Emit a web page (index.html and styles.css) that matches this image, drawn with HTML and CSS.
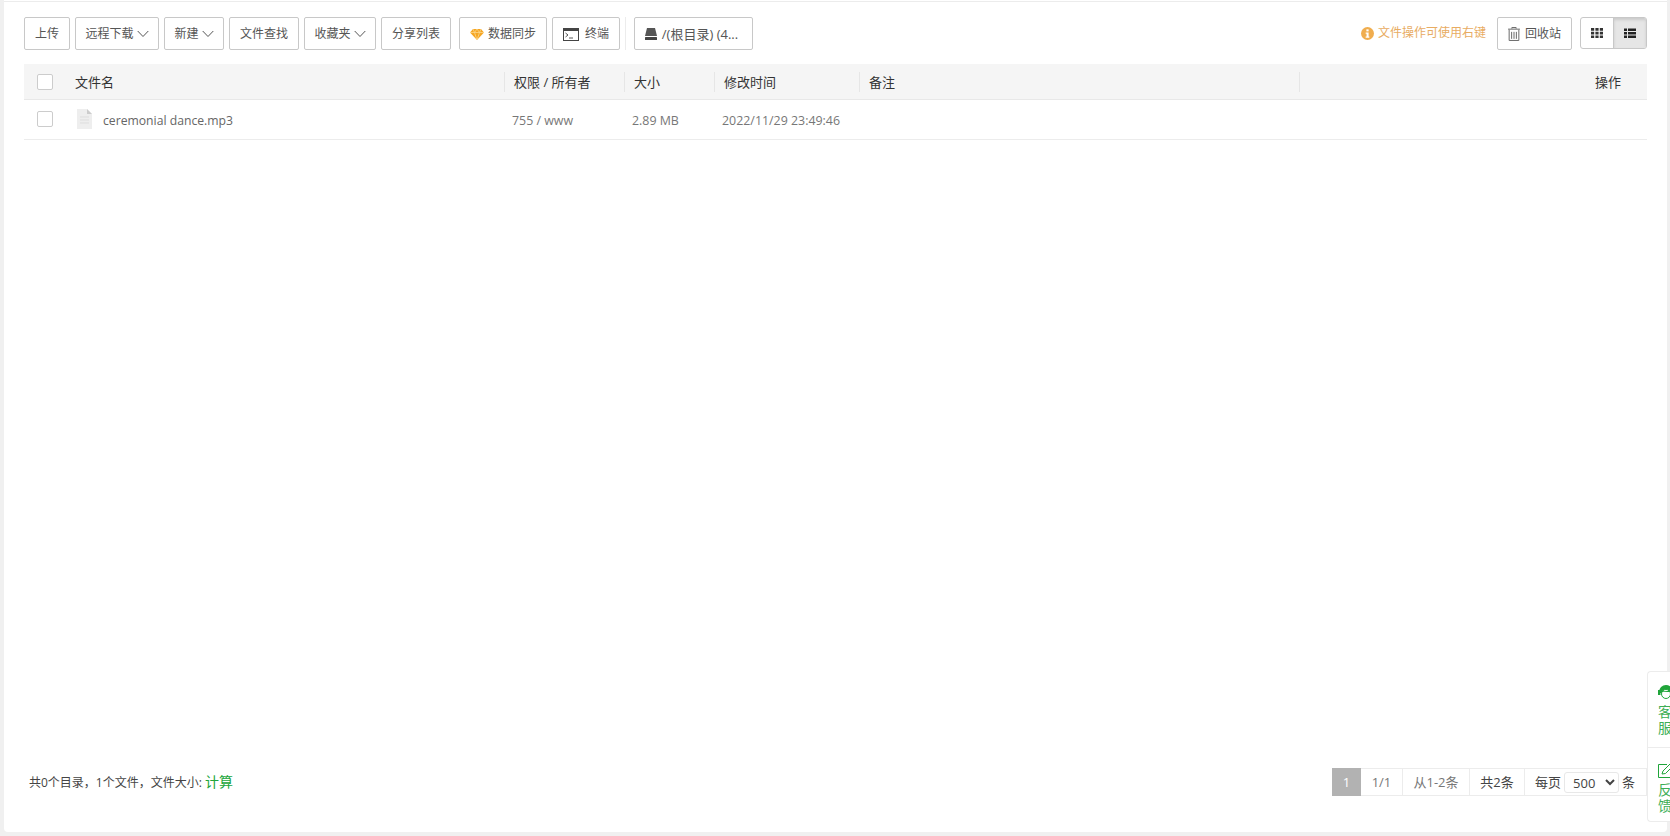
FILE: index.html
```html
<!DOCTYPE html>
<html lang="zh">
<head>
<meta charset="utf-8">
<title>文件</title>
<link rel="stylesheet" href="styles.css">
</head>
<body>
<main class="panel">
  <div class="toolbar">
    <div class="tools">
      <button class="btn w-upload">上传</button>
      <button class="btn w-remote">远程下载<svg class="chev" viewBox="0 0 12 8"><path d="M.7 1l5.300 5.500L11.300 1" fill="none" stroke="#555" stroke-width="1"/></svg></button>
      <button class="btn w-new">新建<svg class="chev" viewBox="0 0 12 8"><path d="M.7 1l5.300 5.500L11.300 1" fill="none" stroke="#555" stroke-width="1"/></svg></button>
      <button class="btn w-find">文件查找</button>
      <button class="btn w-fav">收藏夹<svg class="chev" viewBox="0 0 12 8"><path d="M.7 1l5.300 5.500L11.300 1" fill="none" stroke="#555" stroke-width="1"/></svg></button>
      <button class="btn w-find">分享列表</button>
      <button class="btn w-sync gap-left"><svg class="ico-gem" viewBox="0 0 14 11"><path d="M3 0h8l3 3.500-7 7.500-7-7.500z" fill="#f5a623"/><path d="M0 3.500h14M4.500 3.500L7 11l2.500-7.500M3 0l1.500 3.500L7 0l2.500 3.500L11 0" fill="none" stroke="#fdd58a" stroke-width=".8"/></svg>数据同步</button>
      <button class="btn w-term"><svg class="ico-term" viewBox="0 0 16 13"><rect x=".5" y=".5" width="15" height="12" fill="#fff" stroke="#444"/><rect x="0" y="0" width="16" height="3" fill="#444"/><path d="M2.500 5l2.500 2-2.500 2" fill="none" stroke="#444" stroke-width=".9"/><path d="M6 10h4" stroke="#444" stroke-width=".9"/></svg>终端</button>
      <span class="sep"></span>
      <button class="btn w-path"><svg class="ico-drive" viewBox="0 0 12 12"><path d="M2 0h8l2 8H0z" fill="#555"/><rect y="9" width="12" height="3" rx=".5" fill="#444"/></svg>/(根目录) (4...</button>
    </div>
    <div class="tools-right">
      <span class="hint"><svg class="ico-info" viewBox="0 0 14 14"><circle cx="7" cy="7" r="7" fill="#f0ad4e"/><rect x="5.800" y="2.500" width="2.400" height="2.200" fill="#fff"/><path d="M5 6h3.200v4.200H9v1.300H5v-1.300h1V7.300H5z" fill="#fff"/></svg>文件操作可使用右键</span>
      <button class="btn w-trash"><svg class="ico-trash" viewBox="0 0 11 13"><path d="M3.500 1.500V.5h4v1M0 2h11M1 2.500v10h9v-10M3.300 4.500v6.500M5.500 4.500v6.500M7.700 4.500v6.500" fill="none" stroke="#666" stroke-width=".9"/></svg>回收站</button>
      <div class="view-switch">
        <span class="view-btn"><svg class="ico-view" viewBox="0 0 12 12"><path d="M0 1h3.200v2.700H0zM4.400 1h3.200v2.700H4.400zM8.800 1H12v2.700H8.800zM0 4.700h3.200v2.700H0zM4.400 4.700h3.200v2.700H4.400zM8.800 4.700H12v2.700H8.800zM0 8.400h3.200v2.700H0zM4.400 8.400h3.200v2.700H4.400zM8.800 8.400H12v2.700H8.800z" fill="#333"/></svg></span>
        <span class="view-btn active"><svg class="ico-view" viewBox="0 0 12 12"><path d="M0 1.500h3v2.500H0zM4 1.500h8v2.500H4zM0 5h3v2.500H0zM4 5h8v2.500H4zM0 8.500h3V11H0zM4 8.500h8V11H4z" fill="#222"/></svg></span>
      </div>
    </div>
  </div>

  <div class="row head">
    <div class="cell first"><span class="check"></span><span class="name-label">文件名</span></div>
    <div class="cell col-div">权限 / 所有者</div>
    <div class="cell col-div">大小</div>
    <div class="cell col-div">修改时间</div>
    <div class="cell col-div">备注</div>
    <div class="cell col-div end">操作</div>
  </div>
  <div class="row item">
    <div class="cell first"><span class="check"></span>
      <svg class="ico-file" viewBox="0 0 15 20"><path d="M0 0h10l5 5v15H0z" fill="#eee"/><path d="M10 0l5 5h-5z" fill="#ccc"/><path d="M3 8h9M3 11h9M3 14h9" stroke="#ddd" stroke-width="1"/></svg>
      <span class="file-name">ceremonial dance.mp3</span></div>
    <div class="cell pad-row">755 / www</div>
    <div class="cell pad-row">2.89 MB</div>
    <div class="cell pad-row">2022/11/29 23:49:46</div>
    <div class="cell"></div>
    <div class="cell"></div>
  </div>

  <div class="footer">
    <div class="summary">共0个目录，1个文件，文件大小: <a class="calc">计算</a></div>
    <div class="pager">
      <span class="page current">1</span>
      <span class="page p-muted w-a">1/1</span>
      <span class="page p-muted w-b">从1-2条</span>
      <span class="page w-c">共2条</span>
      <span class="page last">每页<select class="size"><option>500</option></select>条</span>
    </div>
  </div>
</main>

<aside class="float-side">
  <div class="side-item">
    <svg class="ico-service" viewBox="0 0 16 16"><path d="M1 8a7 7 0 0 1 14 0l-1 1H2z" fill="#20a53a"/><circle cx="8" cy="10" r="4.500" fill="#fff" stroke="#20a53a"/><path d="M4 7q4 1 8-1v2H4z" fill="#20a53a"/><rect x="0" y="6" width="2.500" height="5" fill="#20a53a"/></svg>
    <span>客<br>服</span>
  </div>
  <div class="side-item second">
    <svg class="ico-edit" viewBox="0 0 16 14"><path d="M13 7v6.500H.5V.5H9" fill="none" stroke="#20a53a"/><path d="M4 10l1-3 7-7 2.500 2.500-7 7z" fill="none" stroke="#20a53a"/></svg>
    <span>反<br>馈</span>
  </div>
</aside>
</body>
</html>
```

FILE: styles.css
```css
* { box-sizing: border-box; }
html, body { height: 100%; }
body {
  margin: 0;
  overflow: hidden;
  padding: 0 3px 4px 4px;
  background: #f0f0f0;
  color: #333;
  font: 12px/1.4 "Open Sans", "Noto Sans CJK SC", sans-serif;
}
.panel {
  height: 832px;
  background: #fff;
  border-radius: 0 0 4px 4px;
  padding: 17px 20px 0;
  display: flex;
  flex-direction: column;
  box-shadow: inset 0 1px 0 #fff, inset 0 2px 0 #ececec;
}
.toolbar { display: flex; justify-content: space-between; height: 33px; }
.tools { display: flex; gap: 5px; }
.tools-right { display: flex; align-items: flex-start; }
.btn {
  height: 33px;
  padding: 1px 0 0;
  border: 1px solid #c8c8c8;
  border-radius: 2px;
  background: #fff;
  color: #555;
  font: inherit;
  display: inline-flex;
  align-items: center;
  justify-content: center;
}
.w-upload { width: 46px; }
.w-remote { width: 84px; }
.w-new { width: 60px; }
.w-find { width: 70px; }
.w-fav { width: 72px; }
.w-sync { width: 88px; }
.w-term { width: 68px; }
.w-path { width: 119px; font-size: 13px; padding-right: 4px; }
.w-trash { width: 75px; margin-right: 8px; }
.gap-left { margin-left: 3px; }
.chev { width: 12px; height: 8px; margin-left: 3px; }
.ico-gem { width: 14px; height: 11px; margin-right: 4px; }
.ico-term { width: 16px; height: 13px; margin-right: 6px; }
.ico-drive { width: 12px; height: 12px; margin-right: 5px; }
.ico-trash { width: 12px; height: 14px; margin-right: 5px; }
.sep { width: 1px; height: 33px; background: #ececec; margin-right: 3px; }
.hint {
  display: inline-flex;
  align-items: center;
  height: 33px;
  margin-right: 11px;
  color: #e8ac62;
}
.ico-info { width: 13px; height: 13px; margin-right: 4px; }
.view-switch {
  display: flex;
  width: 67px;
  height: 32px;
  border: 1px solid #c8c8c8;
  border-radius: 3px;
  overflow: hidden;
}
.view-btn { flex: 1; display: flex; align-items: center; justify-content: center; }
.view-btn.active { background: #e6e6e6; box-shadow: inset 0 2px 3px rgba(0,0,0,.12); border-left: 1px solid #c8c8c8; }
.ico-view { width: 12px; height: 12px; }
.row {
  display: grid;
  grid-template-columns: 480px 120px 90px 145px 440px 348px;
  align-items: center;
}
.head {
  margin-top: 14px;
  height: 36px;
  background: #f5f5f5;
  border-bottom: 1px solid #e8e8e8;
  color: #333;
  font-size: 13px;
}
.item {
  height: 40px;
  border-bottom: 1px solid #ececec;
  color: #777;
  font-size: 12.400px;
}
.cell { display: flex; align-items: center; min-width: 0; }
.first { padding-left: 13px; }
.col-div { height: 20px; border-left: 1px solid #e6e6e6; padding: 2px 0 0 9px; }
.end { justify-content: flex-end; padding-right: 26px; }
.pad-row { padding: 3px 0 0 8px; }
.check {
  width: 16px;
  height: 16px;
  border: 1px solid #ccc;
  border-radius: 2px;
  background: #fff;
  flex: none;
}
.name-label { margin: 2px 0 0 22px; }
.ico-file { width: 15px; height: 20px; margin-left: 24px; }
.file-name { margin: 3px 0 0 11px; color: #666; font-size: 12.200px; }
.footer {
  margin-top: auto;
  margin-bottom: 36px;
  display: flex;
  justify-content: space-between;
  align-items: center;
  height: 28px;
}
.summary { padding-left: 5px; color: #444; }
.calc { color: #20a53a; font-size: 14px; }
.pager { display: flex; height: 28px; font-size: 13px; }
.page {
  display: flex;
  align-items: center;
  justify-content: center;
  height: 28px;
  border: 1px solid #ececec;
  border-left: 0;
  color: #444;
}
.current { width: 29px; background: #b2b2b2; border: 0; color: #fff; }
.p-muted { color: #777; }
.w-a { width: 42px; }
.w-b { width: 67px; }
.w-c { width: 55px; }
.last { width: 122px; justify-content: flex-start; padding-left: 10px; }
.size {
  width: 55px;
  height: 21px;
  margin: 0 3px;
  padding: 0 0 0 4px;
  border: 1px solid #e8e8e8;
  border-radius: 3px;
  background: #fff;
  color: #444;
  font: inherit;
}
.float-side {
  position: fixed;
  top: 671px;
  right: 0;
  width: 23px;
  height: 151px;
  overflow: hidden;
  background: #fff;
  border: 1px solid #ececec;
  border-right: 0;
  border-radius: 4px 0 0 4px;
  color: #3cae55;
  font-size: 14px;
  line-height: 16px;
}
.side-item { width: 40px; padding: 12px 0 0 10px; height: 75px; }
.side-item span { display: block; margin-top: 4px; }
.side-item.second { border-top: 1px solid #ececec; padding-top: 16px; height: 76px; }
.ico-service { display: block; width: 16px; height: 16px; }
.ico-edit { display: block; width: 16px; height: 14px; }
```
